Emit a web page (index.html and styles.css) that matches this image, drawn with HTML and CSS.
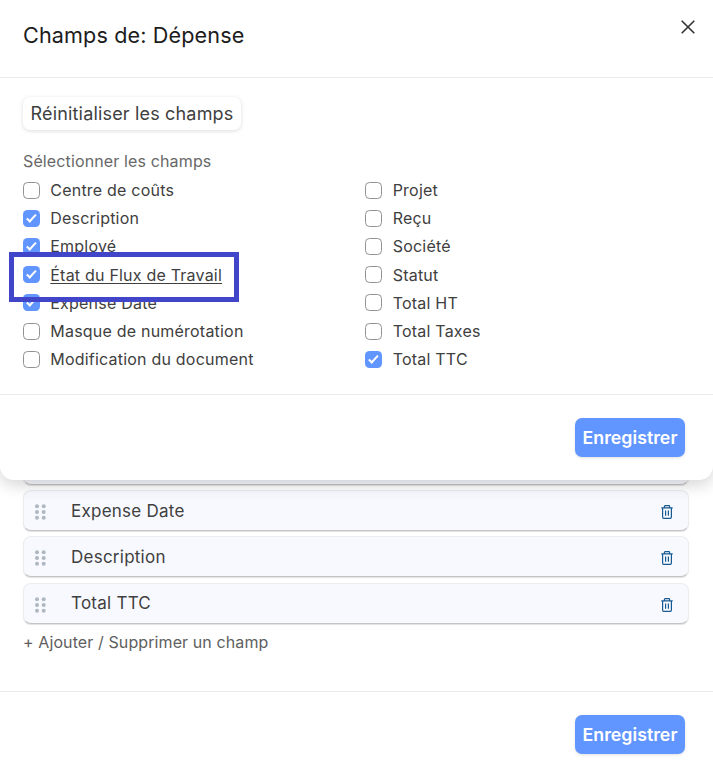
FILE: index.html
```html
<!DOCTYPE html>
<html lang="fr">
<head>
<meta charset="utf-8">
<title>Champs de: Dépense</title>
<link rel="stylesheet" href="styles.css">
</head>
<body>
<svg class="defs" width="0" height="0" aria-hidden="true">
  <symbol id="trash" viewBox="0 0 12 14"><path d="M.3 2.8h11.4M3.4 2.6V1.5q0-.8.8-.8h3.6q.8 0 .8.8v1.1M1.6 3v9q0 1.3 1.2 1.3h6.4q1.2 0 1.2-1.3V3M4.6 5.4v5.3M7.4 5.4v5.3" fill="none" stroke="currentColor" stroke-width="1.2"/></symbol>
  <symbol id="grip" viewBox="0 0 11 16"><g fill="currentColor"><circle cx="2" cy="2.3" r="2"/><circle cx="8.7" cy="2.3" r="2"/><circle cx="2" cy="8" r="2"/><circle cx="8.7" cy="8" r="2"/><circle cx="2" cy="13.7" r="2"/><circle cx="8.7" cy="13.7" r="2"/></g></symbol>
</svg>
<div class="page">
  <main class="panel">
    <ul class="rows">
      <li class="row"></li>
      <li class="row"><svg class="grip"><use href="#grip"/></svg><span class="row-name">Expense Date</span><svg class="trash"><use href="#trash"/></svg></li>
      <li class="row"><svg class="grip"><use href="#grip"/></svg><span class="row-name">Description</span><svg class="trash"><use href="#trash"/></svg></li>
      <li class="row"><svg class="grip"><use href="#grip"/></svg><span class="row-name">Total TTC</span><svg class="trash"><use href="#trash"/></svg></li>
    </ul>
    <a class="add"><span>+ Ajouter / Supprimer un champ</span></a>
    <footer class="footer"><button class="save">Enregistrer</button></footer>
  </main>
  <section class="modal">
    <header class="modal-head">
      <h1>Champs de: Dépense</h1>
      <svg class="close" viewBox="0 0 14 14"><path d="M.7.7l12.6 12.6M13.3.7L.7 13.3" stroke="currentColor" stroke-width="1.6"/></svg>
    </header>
    <div class="modal-body">
      <button class="reset"><span>Réinitialiser les champs</span></button>
      <p class="caption"><span>Sélectionner les champs</span></p>
      <div class="fields">
        <div class="col">
          <label><input type="checkbox"><span>Centre de coûts</span></label>
          <label><input type="checkbox" checked><span>Description</span></label>
          <label><input type="checkbox" checked><span>Employé</span></label>
          <label class="marked"><input type="checkbox" checked><span>État du Flux de Travail</span></label>
          <label><input type="checkbox" checked><span>Expense Date</span></label>
          <label><input type="checkbox"><span>Masque de numérotation</span></label>
          <label><input type="checkbox"><span>Modification du document</span></label>
        </div>
        <div class="col">
          <label><input type="checkbox"><span>Projet</span></label>
          <label><input type="checkbox"><span>Reçu</span></label>
          <label><input type="checkbox"><span>Société</span></label>
          <label><input type="checkbox"><span>Statut</span></label>
          <label><input type="checkbox"><span>Total HT</span></label>
          <label><input type="checkbox"><span>Total Taxes</span></label>
          <label><input type="checkbox" checked><span>Total TTC</span></label>
        </div>
      </div>
    </div>
    <footer class="footer"><button class="save">Enregistrer</button></footer>
  </section>
</div>
</body>
</html>
```
FILE: styles.css
```css
*, ::before, ::after { box-sizing: border-box; }
body { margin: 0; background: #fff; color: #404040; font-family: Inter, "Liberation Sans", sans-serif; }
.defs { display: block; }
.page { position: relative; height: 770px; overflow: hidden; }
.panel { padding-top: 444px; }
.rows { list-style: none; margin: 0; padding: 0 24px 0 23px; display: grid; grid-auto-rows: 41px; gap: 5.2px; }
.row { display: flex; align-items: center; padding: 0 15px 0 11px; background: #f8f9ff; border: 1px solid #ededf0; border-bottom-color: #c4c4c4; border-radius: 8px; box-shadow: 0 1px 1px rgba(0,0,0,.12); }
.grip { width: 11px; height: 16px; color: #afb8c1; margin-top: 3px; }
.row-name { flex: 1; margin-left: 25px; font-size: 17px; letter-spacing: .25px; }
.trash { width: 12px; height: 14px; color: #175a92; margin-top: 3px; }
.add { display: block; margin: 7.4px 23px 0; height: 22px; line-height: 22px; font-size: 16px; letter-spacing: .1px; color: #606060; }
.panel .footer { margin-top: 38px; }
.footer { border-top: 1px solid #ebebeb; padding: 23px 28px; display: flex; justify-content: flex-end; }
.save { width: 110px; height: 39px; padding: 0; border: 0; border-radius: 7px; background: #6195ff; color: #fff; font: 600 17.8px Inter, sans-serif; box-shadow: 0 1px 3px rgba(0,0,0,.12); }
.modal .save { padding-bottom: 1px; }
.modal { position: absolute; inset: 0 0 auto; height: 480px; background: #fff; border-radius: 0 0 14px 14px; box-shadow: 0 5px 16px rgba(0,0,0,.17); }
.modal-head { height: 78px; display: flex; justify-content: space-between; padding: 20px 18px 0 23px; border-bottom: 1px solid #ebebeb; }
h1 { margin: 0; font-size: 21.6px; line-height: 30px; font-weight: 400; letter-spacing: .13px; color: #1c1c1c; }
.close { width: 14px; height: 14px; color: #333; }
.modal-body { height: 316px; padding: 19px 23px 0; }
.reset { display: block; width: 218px; height: 33px; padding: 0; border: 0; border-radius: 7px; background: #fff; box-shadow: 0 1px 4px rgba(0,0,0,.14); color: #404040; font: 400 18px Inter, sans-serif; letter-spacing: .17px; }
.caption { margin: 20px 0 4px; font-size: 16px; line-height: 22px; letter-spacing: .13px; color: #686868; }
.fields { display: grid; grid-template-columns: 342.4px 1fr; }
.col { display: grid; grid-auto-rows: 28.2px; }
label { display: flex; align-items: center; gap: 10.3px; font-size: 16px; letter-spacing: .21px; position: relative; }
input { appearance: none; width: 17px; height: 17px; margin: 0; border: 1px solid #929292; border-radius: 4.5px; background: #fff; }
input:checked { border: 0; background: #6195ff; display: grid; place-items: center; }
input:checked::after { content: ""; width: 9.5px; height: 5px; border: solid #fff; border-width: 0 0 2px 2px; transform: translate(-.5px, -1px) rotate(-47deg); }
.marked span { text-decoration: underline; text-underline-offset: 2px; text-decoration-thickness: 1px; text-decoration-skip-ink: none; }
.marked::before { content: ""; position: absolute; z-index: 1; left: -14px; top: -8.6px; width: 230px; height: 50px; border: 5px solid #4145ca; }
```
